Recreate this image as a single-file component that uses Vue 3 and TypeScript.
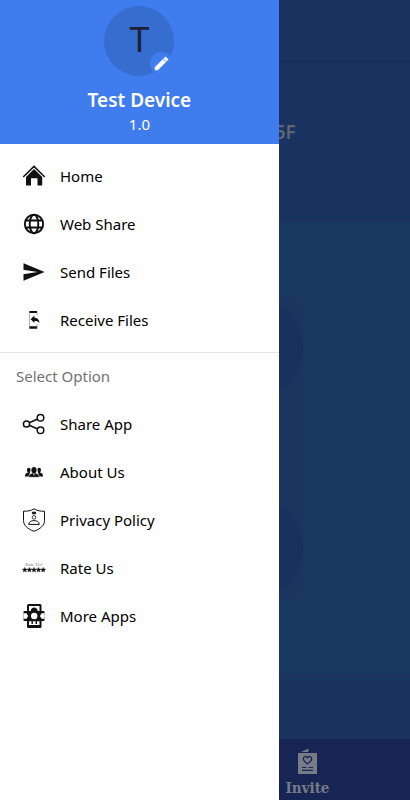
<script setup lang="ts">
type IconName = 'home' | 'globe' | 'send' | 'receive' | 'share' | 'people' | 'privacy' | 'rate' | 'apps'

interface MenuItem {
  label: string
  icon: IconName
}

const mainItems: MenuItem[] = [
  { label: 'Home', icon: 'home' },
  { label: 'Web Share', icon: 'globe' },
  { label: 'Send Files', icon: 'send' },
  { label: 'Receive Files', icon: 'receive' },
]

const optionItems: MenuItem[] = [
  { label: 'Share App', icon: 'share' },
  { label: 'About Us', icon: 'people' },
  { label: 'Privacy Policy', icon: 'privacy' },
  { label: 'Rate Us', icon: 'rate' },
  { label: 'More Apps', icon: 'apps' },
]

const groups = [
  { title: '', items: mainItems },
  { title: 'Select Option', items: optionItems },
]

const star = 'M0-2.4.7-.8 2.4-.7 1.1.4 1.5 2.1 0 1.2-1.5 2.1-1.1.4-2.4-.7-.7-.8z'
</script>

<template>
  <div class="screen">
    <div class="page">
      <div class="app-bar"></div>
      <div class="hero"><span class="device">5F</span></div>
      <main class="content">
        <div class="actions">
          <span class="action"></span>
          <span class="action"></span>
        </div>
      </main>
      <div class="banner"></div>
      <nav class="bottom-nav">
        <a class="invite" href="#">
          <svg class="invite-icon" viewBox="0 0 20 26" aria-hidden="true">
            <path d="M3 4 10.400.6V4z" fill="#777b86" />
            <path d="M0 5h19v21H0z" fill="#777b86" />
            <path d="M9.500 15.800C7 13.900 5.300 12.500 5.300 10.700c0-2.500 3-3 4.200-.9 1.200-2.100 4.200-1.600 4.200.9 0 1.800-1.700 3.200-4.200 5.100z" fill="none" stroke="#182556" stroke-width="1.300" />
            <path d="M4 19.500h4.500M10.500 19.500H15M4 22.300h11" stroke="#182556" stroke-width="1.200" />
          </svg>
          <span>Invite</span>
        </a>
      </nav>
    </div>

    <aside class="drawer">
      <header class="profile">
        <div class="avatar">
          <span>T</span>
          <button class="edit" type="button" aria-label="Edit">
            <svg viewBox="0 0 24 24" aria-hidden="true">
              <path d="M3 17.250V21h3.750L17.810 9.940l-3.750-3.750L3 17.250zM20.710 7.040a1 1 0 0 0 0-1.410l-2.340-2.340a1 1 0 0 0-1.410 0l-1.830 1.830 3.750 3.750 1.830-1.830z" fill="#fff" stroke="#fff" />
            </svg>
          </button>
        </div>
        <h1 class="name">Test Device</h1>
        <p class="version">1.0</p>
      </header>

      <section v-for="group in groups" :key="group.title" class="group">
        <h2 v-if="group.title" class="group-title">{{ group.title }}</h2>
        <ul class="menu">
          <li v-for="item in group.items" :key="item.label">
            <a class="item" href="#">
              <svg class="icon" viewBox="0 0 24 24" aria-hidden="true">
                <g v-if="item.icon === 'home'">
                  <path d="M1.200 13 12 2.400 22.800 13" fill="none" stroke="#111" stroke-width="1.500" />
                  <path d="M12 5.100 20.200 13v8.500H15.500v-7.300h-6.500v7.300H4V13z" fill="#111" />
                </g>
                <g v-else-if="item.icon === 'globe'" fill="none" stroke="#111" stroke-width="1.900">
                  <circle cx="12" cy="12" r="9.200" />
                  <ellipse cx="12" cy="12" rx="4.300" ry="9.200" />
                  <path d="M3.500 8.500h17M3.500 15.500h17" />
                </g>
                <path v-else-if="item.icon === 'send'" d="M1.500 3.300 22.600 12 1.500 20.700v-6.400L15.500 12 1.500 9.700z" fill="#111" />
                <g v-else-if="item.icon === 'receive'">
                  <path d="M7.300 3h7.800v2.100H7.300zM7.300 18.300h7.800v2.500H7.300z" fill="#111" />
                  <path d="M7.400 4v15M15 4v3M15 16v4" fill="none" stroke="#777" stroke-width=".6" />
                  <path d="M8.600 11.200 12.400 7.500v2.300c2.900 0 4.700 1.700 5.200 5.100-1.300-1.500-2.800-2-5.200-2v2.200z" fill="#111" />
                </g>
                <g v-else-if="item.icon === 'share'" fill="none" stroke="#111" stroke-width="1.500">
                  <path d="m7.300 10.800 7.900-3.600M7.300 13.200l7.900 3.600" />
                  <circle cx="4.500" cy="12" r="3.100" />
                  <circle cx="18.500" cy="5.700" r="3.300" />
                  <circle cx="18.500" cy="18.300" r="3.300" />
                </g>
                <g v-else-if="item.icon === 'people'" fill="#111">
                  <path d="M3 16.500c0-2.400.7-3.200 3.200-3.900-1.800-1.600-1.500-4.800.5-4.800 1.300 0 2 1 1.900 2.500L7.500 14v2.500zM21 16.500c0-2.400-.7-3.200-3.200-3.900 1.800-1.600 1.500-4.800-.5-4.800-1.300 0-2 1-1.900 2.500l1.100 3.700v2.500z" />
                  <path d="M6.700 17.300c0-2.700 1-3.300 3.700-4-2-2.200-1.700-6.600 1.600-6.600s3.600 4.400 1.600 6.600c2.700.7 3.700 1.300 3.700 4z" stroke="#fff" stroke-width=".5" />
                  <path d="m11.200 13.600.8 2.500.8-2.500z" fill="#fff" />
                </g>
                <g v-else-if="item.icon === 'privacy'" fill="none" stroke="#111" stroke-width="1">
                  <path d="M12 .8c3.200 2 6.800 2.600 10.500 2.400v9.300c0 5-4.200 8.400-10.500 10.800C5.700 20.900 1.500 17.500 1.500 12.500V3.200C5.200 3.400 8.800 2.800 12 .8z" />
                  <path d="M10.400 4.200h3.200v1.600h-3.200z" fill="#111" />
                  <circle cx="12" cy="9.400" r="1.800" stroke-width=".8" />
                  <path d="M6.700 16.400c.3-2.700 2.300-3.400 4-3.700h2.600c1.700.3 3.700 1 4 3.700z" />
                </g>
                <g v-else-if="item.icon === 'rate'">
                  <text class="rate-text" x="12" y="10">Rate Us!</text>
                  <path v-for="n in 5" :key="n" :d="star" :transform="`translate(${n * 4.600 - 1.800} 13.800)`" fill="#111" stroke="#111" stroke-width=".4" />
                </g>
                <g v-else>
                  <rect x="5" y="0" width="14.500" height="24" rx="1.500" fill="#111" />
                  <path d="M7 2h10.500v5H7zM7 17.300h10.500v3.800H7z" fill="#fff" />
                  <path d="M8.700 7.200c0-5 7-5 7 0z" fill="#111" />
                  <path d="M10.200 17v3M14.300 17v3" stroke="#111" stroke-width="1.400" />
                  <rect x="1.500" y="7" width="21" height="10" rx="1" fill="#111" />
                  <circle cx="12.200" cy="12" r="3.200" fill="#fff" />
                  <path d="M1.500 9.200h3l1.700 2.800-1.700 2.800h-3zM22.600 9.200h-3L17.900 12l1.700 2.800h3z" fill="#fff" />
                </g>
              </svg>
              <span>{{ item.label }}</span>
            </a>
          </li>
        </ul>
      </section>
    </aside>
  </div>
</template>

<style>
body {
  margin: 0;
}
</style>

<style scoped>
.screen {
  position: relative;
  min-height: 100vh;
  display: flex;
  overflow: hidden;
  font-family: 'Noto Sans', 'Open Sans', sans-serif;
}

.page {
  flex: 1;
  display: flex;
  flex-direction: column;
  background: #183860;
}

.app-bar {
  height: 61px;
  background: #1a325f;
  border-bottom: 1px solid #172c56;
}

.hero {
  box-sizing: border-box;
  height: 160px;
  padding: 56px 0 0 67%;
  background: #1a325f;
}

.device {
  color: #5e6671;
  font-size: 19px;
  font-weight: 600;
  line-height: 28px;
}

.content {
  flex: 1;
  display: flex;
  align-items: center;
  padding-left: 49%;
}

.actions {
  display: flex;
  flex-direction: column;
  gap: 98px;
  background: #1d345f;
}

.action {
  width: 102px;
  height: 102px;
  border-radius: 50%;
  background: #1a305f;
}

.banner {
  height: 65px;
  background: #1a335f;
}

.bottom-nav {
  display: flex;
  justify-content: flex-end;
  height: 61px;
  background: #172555;
}

.invite {
  width: 50%;
  display: flex;
  flex-direction: column;
  align-items: center;
  gap: 4px;
  padding-top: 9px;
  color: #777b86;
  font-family: 'DejaVu Serif Condensed', 'DejaVu Serif', serif;
  font-size: 15px;
  font-weight: 700;
  line-height: 20px;
  text-decoration: none;
}

.invite-icon {
  width: 20px;
  height: 26px;
}

.drawer {
  position: absolute;
  inset: 0 auto 0 0;
  width: 68%;
  background: #fefefe;
}

.profile {
  box-sizing: border-box;
  height: 144px;
  display: flex;
  flex-direction: column;
  align-items: center;
  padding-top: 6px;
  background: #3f7ced;
  color: #fff;
}

.avatar {
  position: relative;
  display: grid;
  place-items: center;
  width: 70px;
  height: 70px;
  border-radius: 50%;
  background: #386dd0;
  color: #1b2233;
  font-family: Roboto, sans-serif;
  font-size: 35px;
  line-height: 40px;
}

.edit {
  position: absolute;
  right: 1px;
  bottom: 1px;
  display: grid;
  place-items: center;
  width: 23px;
  height: 23px;
  padding: 0;
  border: 0;
  border-radius: 50%;
  background: #3f7ced;
}

.edit svg {
  width: 17px;
  height: 17px;
}

.name {
  margin: 10px 0 0;
  font-size: 19px;
  font-weight: 600;
  line-height: 28px;
}

.version {
  margin: 0;
  font-size: 15px;
  font-weight: 400;
  line-height: 20px;
}

.group + .group {
  border-top: 1px solid #e4e4e4;
}

.group-title {
  margin: 0;
  padding-left: 16px;
  color: #737373;
  font-size: 15px;
  font-weight: 400;
  line-height: 47px;
}

.menu {
  margin: 0;
  padding: 0;
  list-style: none;
}

.group:first-of-type .menu {
  padding: 8px 0;
}

.item {
  display: flex;
  align-items: center;
  gap: 14px;
  height: 48px;
  padding-left: 22px;
  color: #000;
  font-size: 15px;
  font-weight: 400;
  text-decoration: none;
}

.icon {
  width: 24px;
  height: 24px;
}

.rate-text {
  fill: #777;
  font-family: 'Liberation Serif', serif;
  font-size: 5px;
  text-anchor: middle;
}
</style>
